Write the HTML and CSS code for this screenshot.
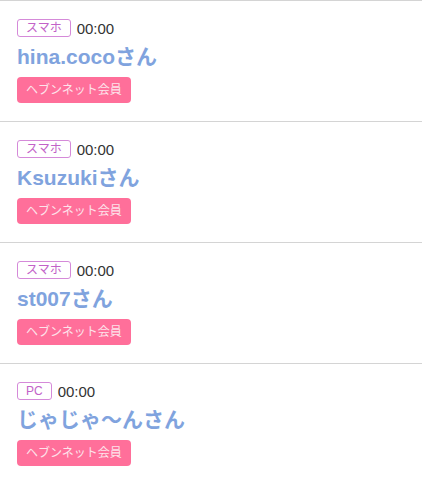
FILE: index.html
```html
<!DOCTYPE html>
<html lang="ja">
<head>
<meta charset="UTF-8" />
<meta name="viewport" content="width=device-width, initial-scale=1" />
<title>会員一覧</title>
<link rel="stylesheet" href="styles.css">
</head>
<body>

<ul class="memberList">
  <li class="memberItem">
    <div class="meta"><span class="device">スマホ</span><span class="time">00:00</span></div>
    <div class="name">hina.cocoさん</div>
    <span class="badge">ヘブンネット会員</span>
  </li>
  <li class="memberItem">
    <div class="meta"><span class="device">スマホ</span><span class="time">00:00</span></div>
    <div class="name">Ksuzukiさん</div>
    <span class="badge">ヘブンネット会員</span>
  </li>
  <li class="memberItem">
    <div class="meta"><span class="device">スマホ</span><span class="time">00:00</span></div>
    <div class="name">st007さん</div>
    <span class="badge">ヘブンネット会員</span>
  </li>
  <li class="memberItem">
    <div class="meta"><span class="device">PC</span><span class="time">00:00</span></div>
    <div class="name">じゃじゃ〜んさん</div>
    <span class="badge">ヘブンネット会員</span>
  </li>
</ul>

</body>
</html>
```

FILE: styles.css
```css
/* 全体 */
body {
  margin: 0;
  padding: 0;
  background: #fff;
  font-family: "Liberation Sans", "Noto Sans CJK JP", sans-serif;
  color: #333;
}
.memberList {
  list-style: none;
  margin: 0;
  padding: 0;
}
/* 一件分 */
.memberItem {
  border-top: 1px solid #d4d4d4;
  padding: 18px 17px 17px;
  height: 85px;
}
.meta {
  display: flex;
  align-items: center;
  gap: 6px;
  height: 18px;
}
.device {
  display: inline-block;
  box-sizing: border-box;
  height: 18px;
  line-height: 16px;
  padding: 0 8px;
  border: 1px solid #d58ad9;
  border-radius: 3px;
  color: #c262c8;
  font-size: 12px;
  text-align: center;
}
.time {
  font-size: 15px;
  color: #333;
}
.name {
  margin-top: 7px;
  font-size: 21px;
  font-weight: bold;
  color: #80a3de;
  line-height: 26px;
}
.badge {
  display: inline-block;
  margin-top: 7px;
  height: 26px;
  line-height: 26px;
  padding: 0 9px;
  background: #ff6f9a;
  border-radius: 4px;
  color: #fde3ea;
  font-size: 12px;
}
```
